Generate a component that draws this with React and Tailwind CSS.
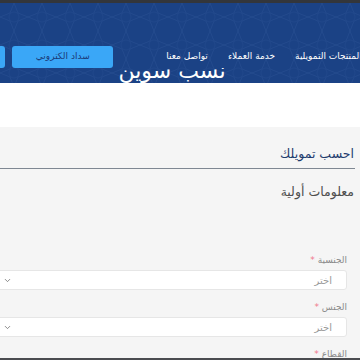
import { ChevronDown } from "lucide-react";

const navLinks = ["أسعار المنتجات التمويلية", "خدمة العملاء", "تواصل معنا"];

const fields = [
  { label: "الجنسية", placeholder: "اختر" },
  { label: "الجنس", placeholder: "اختر" },
];

// faint geometric pattern on the hero background
const Pattern = () => (
  <svg className="absolute inset-0 w-full h-full opacity-[0.08]" aria-hidden="true">
    <defs>
      <pattern id="geo" width="28" height="28" patternUnits="userSpaceOnUse">
        <path
          d="M14 0 L18 10 L28 14 L18 18 L14 28 L10 18 L0 14 L10 10 Z"
          fill="none"
          stroke="#9fc3ff"
          strokeWidth="0.8"
        />
        <circle cx="14" cy="14" r="5" fill="none" stroke="#9fc3ff" strokeWidth="0.6" />
      </pattern>
    </defs>
    <rect width="100%" height="100%" fill="url(#geo)" />
  </svg>
);

const SelectField = ({ label, placeholder }) => (
  <div className="flex flex-col">
    <label className="text-[9px] leading-[12px] text-[#8a8a8a] mr-[13px]">
      {label} <span className="text-[#f0788c]">*</span>
    </label>
    <div className="mt-[4px] mr-[13px] -ml-[10px] h-[20px] bg-white border border-[#e6e6e6] rounded-[3px] flex items-center justify-between pr-[14px] pl-[12px]">
      <span className="text-[10px] text-[#9a9a9a]">{placeholder}</span>
      <ChevronDown size={9} strokeWidth={2} className="text-[#666]" />
    </div>
  </div>
);

const App = () => {
  return (
    <div
      dir="rtl"
      className="w-[360px] h-[360px] overflow-hidden flex flex-col bg-white font-['DejaVu_Sans',sans-serif]"
    >
      <div className="h-[3px] bg-[#33363b] shrink-0" />

      {/* navbar + hero */}
      <header className="relative h-[80px] shrink-0 bg-[#1b4285] overflow-hidden">
        <Pattern />
        <div className="relative h-[65px] flex items-end">
          <nav className="flex items-center h-[22px] -mr-[26px] shrink-0">
            {navLinks.map((link) => (
              <a key={link} className="shrink-0 text-[9px] text-white whitespace-nowrap ml-[20px]">
                {link}
              </a>
            ))}
            <div className="flex items-center gap-[7px] mr-[33px] shrink-0">
              <button className="w-[101px] h-[22px] rounded-[3px] bg-[#3aa7f7] text-[9px] text-[#1b3a78]">
                سداد الكتروني
              </button>
              <button className="w-[101px] h-[22px] rounded-[3px] bg-[#3aa7f7] text-[9px] text-[#1b3a78]">
                تسجيل الدخول
              </button>
            </div>
          </nav>
        </div>
        <div className="relative h-[15px] overflow-hidden flex justify-center">
          <h1 className="text-[22px] leading-[22px] text-white -mt-[8px] mr-[16px] whitespace-nowrap">
            نسب سوين
          </h1>
        </div>
      </header>

      <div className="h-[44px] bg-white shrink-0" />

      {/* calculator form */}
      <section className="flex-1 bg-[#f5f5f5] overflow-hidden">
        <div className="pt-[18px] mr-[5px]">
          <h2 className="text-[12.5px] leading-[18px] text-[#1f3c6e] mr-[1px]">احسب تمويلك</h2>
          <div className="h-px bg-[#7f8893] mt-[5px]" />
          <h3 className="text-[12.5px] leading-[18px] text-[#4d4d4d] mt-[14px] mr-[1px]">
            معلومات أولية
          </h3>
        </div>

        <div className="mt-[53px] flex flex-col gap-[11px]">
          {fields.map((f) => (
            <SelectField key={f.label} {...f} />
          ))}
          <label className="text-[9px] leading-[12px] text-[#8a8a8a] mr-[13px]">
            القطاع <span className="text-[#f0788c]">*</span>
          </label>
        </div>
      </section>

      <div className="h-[2px] bg-[#4a4c50] shrink-0" />
    </div>
  );
};

export default App;
